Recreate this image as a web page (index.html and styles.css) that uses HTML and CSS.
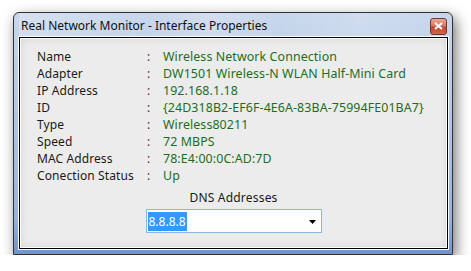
FILE: index.html
```html
<!DOCTYPE html>
<html lang="en">
<head>
  <meta charset="UTF-8">
  <title>Real Network Monitor - Interface Properties</title>
  <link rel="stylesheet" href="styles.css">
</head>
<body>
  <div class="window">
    <div class="titlebar">
      <span class="title">Real Network Monitor - Interface Properties</span>
      <button class="close" aria-label="Close">
        <svg width="9" height="8" viewBox="0 0 9 8">
          <path d="M1 1 L8 7 M8 1 L1 7" stroke="#fff" stroke-width="2" fill="none"/>
        </svg>
      </button>
    </div>
    <div class="client">
      <!-- Eigenschaften -->
      <div class="props">
        <span class="label">Name</span><span class="colon">:</span><span class="value">Wireless Network Connection</span>
        <span class="label">Adapter</span><span class="colon">:</span><span class="value">DW1501 Wireless-N WLAN Half-Mini Card</span>
        <span class="label">IP Address</span><span class="colon">:</span><span class="value">192.168.1.18</span>
        <span class="label">ID</span><span class="colon">:</span><span class="value">{24D318B2-EF6F-4E6A-83BA-75994FE01BA7}</span>
        <span class="label">Type</span><span class="colon">:</span><span class="value">Wireless80211</span>
        <span class="label">Speed</span><span class="colon">:</span><span class="value">72 MBPS</span>
        <span class="label">MAC Address</span><span class="colon">:</span><span class="value">78:E4:00:0C:AD:7D</span>
        <span class="label">Conection Status</span><span class="colon">:</span><span class="value">Up</span>
      </div>
      <div class="dns">
        <div class="dns-label">DNS Addresses</div>
        <div class="combo">
          <span class="selected">8.8.8.8</span>
          <svg class="arrow" width="7" height="4" viewBox="0 0 7 4"><path d="M0 0 H7 L3.5 4 Z" fill="#000"/></svg>
        </div>
      </div>
    </div>
  </div>
</body>
</html>
```

FILE: styles.css
```css
* {
  box-sizing: border-box;
}
body {
  margin: 0;
  background: #fff;
  font-family: "Noto Sans", "Open Sans", sans-serif;
  font-size: 12px;
  color: #1a1a1a;
}

/* Fenster */
.window {
  margin: 12px 0 0 13px;
  width: 440px;
  height: 243px;
  border: 1px solid #2f3338;
  border-radius: 6px 6px 0 0;
  background: linear-gradient(180deg, #c8d7ec 0%, #b4c8e4 40%, #98b3dc 85%, #7194cc 100%);
  box-shadow: 3px 5px 14px rgba(0, 0, 0, 0.55);
  display: flex;
  flex-direction: column;
  padding: 0 4px 5px 5px;
}
.titlebar {
  height: 23px;
  display: flex;
  align-items: center;
  justify-content: space-between;
  padding-left: 2px;
  background: linear-gradient(90deg, rgba(255,255,255,0.25) 0%, rgba(255,255,255,0) 30%, rgba(255,255,255,0.2) 45%, rgba(255,255,255,0) 60%, rgba(255,255,255,0.15) 80%, rgba(255,255,255,0) 100%);
}
.title {
  font-size: 12px;
  color: #111;
  margin-top: 1px;
}
.close {
  width: 17px;
  height: 17px;
  margin: 3px 1px 0 0;
  padding: 0;
  border: 1px solid #6e3a30;
  border-radius: 3px;
  background: linear-gradient(180deg, #eaa796 0%, #d9765f 45%, #c4452a 55%, #d2664a 100%);
  display: flex;
  align-items: center;
  justify-content: center;
}

/* Innenbereich */
.client {
  flex: 1;
  margin-top: 1px;
  border: 1px solid #000;
  box-shadow: 0 0 0 1px #fff, inset 0 0 0 1px #fff, inset 0 0 8px rgba(0, 0, 0, 0.12);
  background: #ececec;
  padding: 10px 0 0 17px;
}
.props {
  display: grid;
  grid-template-columns: 110px 16px auto;
  line-height: 17px;
}
.label {
  letter-spacing: 0.1px;
}
.colon {
  color: #7a1838;
}
.value {
  color: #1e6d1e;
  font-size: 12.4px;
  letter-spacing: 0.1px;
}

.dns {
  display: flex;
  flex-direction: column;
  align-items: center;
  margin: 5px 0 0 -17px;
}
.dns-label {
  line-height: 17px;
  letter-spacing: 0.2px;
}
.combo {
  margin-top: 3px;
  width: 176px;
  height: 24px;
  border: 1px solid #8ab7e3;
  background: #fff;
  display: flex;
  align-items: center;
  justify-content: space-between;
  padding: 0 5px 0 1px;
}
.selected {
  background: #3399ff;
  color: #fff;
  line-height: 19px;
  padding: 0 1px;
}
.arrow {
  margin-top: 1px;
}
```
